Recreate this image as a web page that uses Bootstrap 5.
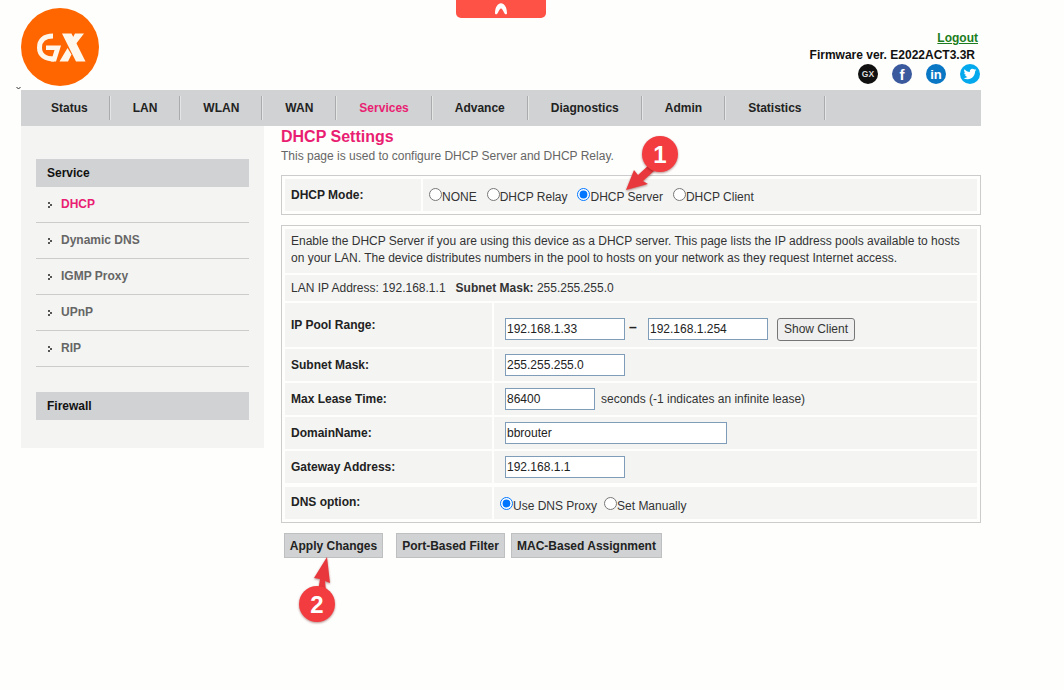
<!DOCTYPE html>
<html lang="en">
<head>
<meta charset="utf-8">
<title>DHCP Settings</title>
<link href="https://cdn.jsdelivr.net/npm/bootstrap@5.3.0/dist/css/bootstrap.min.css" rel="stylesheet">
<style>
body{background:#fefefc;font-family:"Liberation Sans",Arial,sans-serif;font-size:12px;color:#333;position:relative;width:1064px;height:690px;overflow:hidden}
.pagewrap{width:960px;margin-left:21px}
.tophead{height:90px}
.logo-mark{width:78px;height:78px;margin-top:8px;display:block}
.headright{padding-top:31px;line-height:14px;padding-right:1px}
.logout-link{color:#1b7d20;font-weight:700;text-decoration:underline;margin-right:2px;display:block}
.fw-line{font-weight:700;color:#111;margin-top:2px;margin-right:5px;height:14px;line-height:16px}
.socials{gap:14px;margin-top:3px;height:20px}
.socials svg{width:20px;height:20px;display:block}
.topnav{background:#d0d2d3;height:36px;padding-left:7px}
.topnav a{display:block;height:24px;line-height:24px;padding:0 22px 0 23px;font-weight:700;color:#222;text-decoration:none;border-right:1px solid #a9abac;box-shadow:1px 0 0 #e4e5e5}
.topnav a:first-child{padding-right:21px}
.topnav a.on{color:#e91e72}
.sidepane{width:243px;height:322px;background:#f4f5f3;padding:33px 15px 0}
.sidehead{background:#d0d2d3;height:28px;line-height:28px;padding-left:11px;font-weight:700;color:#111}
.sidelink{height:36px;line-height:33px;border-bottom:1px solid #ccc;padding-left:12px;font-weight:700;color:#666;gap:9px}
.sidelink.on{color:#e91e72}
.sidelink svg{width:4px;height:6px;flex:none;margin-top:0}
.side-gap{margin-top:25px}
.mainpane{width:700px;margin-left:17px}
.pagetitle{font-size:16px;font-weight:700;color:#e91e72;line-height:20px;margin:0;padding-top:1px}
.pagesub{color:#666;line-height:14px;margin:2px 0 12px}
.cfgbox{border:1px solid #ccc;padding:1px}
.box-gap{margin-top:10px}
.cfgtable{border-collapse:separate;border-spacing:2px;width:696px;table-layout:fixed}
.cfgtable td{background:#f4f5f3;padding:0 6px;vertical-align:middle;color:#333}
.cfgtable .lbl{font-weight:700;color:#222}
.col-mode{width:136px}
.col-wide{width:207px}
.h32{height:32px}
.radio-cell{padding-top:4px!important}
.radio-cell-low{padding-top:6px!important}
.lift-cell{padding-bottom:2px!important}
.radio-opt{display:inline-flex;align-items:center;margin:0 10px 0 0;color:#333}
.radio-opt input{margin:0;width:13px;height:13px;position:relative;top:-1px}
.radio-opt span{position:relative;top:1px}
.rowtext{line-height:17px;height:44px;padding-bottom:2px!important}
.field{height:22px;border:1px solid #7f9db9;background:#fff;font:12px "Liberation Sans",Arial,sans-serif;color:#222;padding:0 1px;border-radius:0;outline:0;display:block}
.w120{width:120px}.w90{width:90px}.w222{width:222px}
.field-cell{padding-left:11px!important}
.lease-gap{gap:6px}
.rangedash{width:23px;padding-left:4px;font-size:14px;line-height:14px;font-weight:700;color:#222;position:relative;top:-2px}
.showbtn{height:23px;width:78px;padding:0;margin-left:9px;white-space:nowrap;font:12px "Liberation Sans",Arial,sans-serif;color:#333;background:#efefef;border:1px solid #767676;border-radius:3px}
.actbtn{height:25px;background:#d0d2d3;border:1px solid #bdbfc0;border-radius:0;padding:0;font:700 12px "Liberation Sans",Arial,sans-serif;color:#222}
.actrow{padding-left:3px;margin-top:10px}
.overlay{position:absolute;left:0;top:0;width:1064px;height:690px;pointer-events:none}
.numtxt{font:700 24px "Liberation Sans",Arial,sans-serif;fill:#fff}
.pin{filter:drop-shadow(0 1px 1px rgba(90,0,0,.45))}
.pulltab{position:absolute;left:456px;top:0;width:90px;height:18px;background:#ff5247;border-radius:0 0 5px 5px}
.tinycaret{position:absolute;left:16px;top:86px;width:5px;height:4px}
</style>
</head>
<body>
<div class="pulltab d-flex justify-content-center align-items-start">
  <svg width="16" height="16" viewBox="0 0 16 16"><path fill="#fff" d="M2 13.500C2 7 5 3.300 8 3.300C11 3.300 14 7 14 13.500C13 15 12 14.500 11 12.500C10 10.500 9 8.500 8 8.500C7 8.500 6 10.500 5 12.500C4 14.500 3 15 2 13.500Z"/></svg>
</div>
<svg class="tinycaret" viewBox="0 0 5 4" fill="none"><path d="M.5 1 2.500 3 4.500 1" stroke="#333" stroke-width="1"/></svg>

<div class="pagewrap">
  <header class="tophead d-flex justify-content-between">
    <svg class="logo-mark" viewBox="0 0 78 78" role="img" aria-label="GX logo">
      <circle cx="39" cy="39" r="39" fill="#ff6600"/>
      <path d="M32 28C23 28 18.500 32.500 18.500 39.500C18.500 47 24 51 33 51" fill="none" stroke="#fff6ec" stroke-width="5"/>
      <path d="M25 37.500H40L35 53.500H30L33.500 42H25Z" fill="#fff6ec"/>
      <path d="M41 25.500H50.500L64.500 53.500H55Z" fill="#fff6ec"/>
      <path d="M54 25.500H63L54.500 36.500L50 33ZM46.500 40L50.500 46.500L47 53.500H38.500Z" fill="#fff6ec"/>
    </svg>
    <div class="headright text-end">
      <a class="logout-link" href="#">Logout</a>
      <div class="fw-line">Firmware ver. E2022ACT3.3R</div>
      <div class="socials d-flex justify-content-end">
        <svg viewBox="0 0 20 20"><circle cx="10" cy="10" r="10" fill="#111"/><text x="10" y="13" text-anchor="middle" font-family="Liberation Sans" font-weight="700" font-size="8.500" fill="#ddd">GX</text></svg>
        <svg viewBox="0 0 20 20"><circle cx="10" cy="10" r="10" fill="#3b5a9e"/><text x="10" y="16" text-anchor="middle" font-family="Liberation Sans" font-weight="700" font-size="15" fill="#fff">f</text></svg>
        <svg viewBox="0 0 20 20"><circle cx="10" cy="10" r="10" fill="#0a77c5"/><text x="10" y="15" text-anchor="middle" font-family="Liberation Sans" font-weight="700" font-size="13" fill="#fff">in</text></svg>
        <svg viewBox="0 0 20 20"><circle cx="10" cy="10" r="10" fill="#03a9ec"/><path transform="translate(3.600 3.600) scale(.53)" fill="#fff" d="M23.950 4.570a10 10 0 0 1-2.820.770 4.960 4.960 0 0 0 2.160-2.720c-.950.550-2 .950-3.130 1.180a4.920 4.920 0 0 0-8.380 4.480C7.690 8.100 4.070 6.130 1.640 3.160a4.820 4.820 0 0 0-.670 2.480c0 1.710.870 3.210 2.190 4.100a4.900 4.900 0 0 1-2.230-.620v.060a4.920 4.920 0 0 0 3.950 4.830c-.720.190-1.480.220-2.220.080a4.940 4.940 0 0 0 4.600 3.420A9.870 9.870 0 0 1 0 19.540a14 14 0 0 0 7.560 2.210c9.050 0 14-7.500 14-13.980 0-.210 0-.420-.020-.630a9.940 9.940 0 0 0 2.460-2.550z"/></svg>
      </div>
    </div>
  </header>

  <nav class="topnav d-flex align-items-center">
    <a href="#">Status</a><a href="#">LAN</a><a href="#">WLAN</a><a href="#">WAN</a><a href="#" class="on">Services</a><a href="#">Advance</a><a href="#">Diagnostics</a><a href="#">Admin</a><a href="#">Statistics</a>
  </nav>

  <div class="d-flex align-items-start">
    <aside class="sidepane">
      <div class="sidehead">Service</div>
      <div class="sidelink on d-flex align-items-center"><svg viewBox="0 0 4 6" fill="#555"><path d="M0 0h2v2H0zM2 2h2v2H2zM0 4h2v2H0z"/></svg><span>DHCP</span></div>
      <div class="sidelink d-flex align-items-center"><svg viewBox="0 0 4 6" fill="#555"><path d="M0 0h2v2H0zM2 2h2v2H2zM0 4h2v2H0z"/></svg><span>Dynamic DNS</span></div>
      <div class="sidelink d-flex align-items-center"><svg viewBox="0 0 4 6" fill="#555"><path d="M0 0h2v2H0zM2 2h2v2H2zM0 4h2v2H0z"/></svg><span>IGMP Proxy</span></div>
      <div class="sidelink d-flex align-items-center"><svg viewBox="0 0 4 6" fill="#555"><path d="M0 0h2v2H0zM2 2h2v2H2zM0 4h2v2H0z"/></svg><span>UPnP</span></div>
      <div class="sidelink d-flex align-items-center"><svg viewBox="0 0 4 6" fill="#555"><path d="M0 0h2v2H0zM2 2h2v2H2zM0 4h2v2H0z"/></svg><span>RIP</span></div>
      <div class="sidehead side-gap">Firewall</div>
    </aside>

    <main class="mainpane">
      <h1 class="pagetitle">DHCP Settings</h1>
      <p class="pagesub">This page is used to configure DHCP Server and DHCP Relay.</p>

      <div class="cfgbox">
        <table class="cfgtable">
          <colgroup><col class="col-mode"><col></colgroup>
          <tr class="h32">
            <td class="lbl">DHCP Mode:</td>
            <td class="radio-cell">
              <label class="radio-opt"><input type="radio" name="mode"><span>NONE</span></label><label class="radio-opt"><input type="radio" name="mode"><span>DHCP Relay</span></label><label class="radio-opt"><input type="radio" name="mode" checked><span>DHCP Server</span></label><label class="radio-opt"><input type="radio" name="mode"><span>DHCP Client</span></label>
            </td>
          </tr>
        </table>
      </div>

      <div class="cfgbox box-gap">
        <table class="cfgtable">
          <colgroup><col class="col-wide"><col></colgroup>
          <tr><td colspan="2" class="rowtext">Enable the DHCP Server if you are using this device as a DHCP server. This page lists the IP address pools available to hosts on your LAN. The device distributes numbers in the pool to hosts on your network as they request Internet access.</td></tr>
          <tr style="height:26px"><td colspan="2">LAN IP Address: 192.168.1.1 &nbsp;&nbsp;<b>Subnet Mask:</b> 255.255.255.0</td></tr>
          <tr style="height:44px">
            <td class="lbl">IP Pool Range:</td>
            <td class="field-cell">
              <div class="d-flex align-items-center pt-2">
                <input class="field w120" value="192.168.1.33">
                <span class="rangedash">–</span>
                <input class="field w120" value="192.168.1.254">
                <button type="button" class="showbtn">Show Client</button>
              </div>
            </td>
          </tr>
          <tr class="h32"><td class="lbl">Subnet Mask:</td><td class="field-cell"><input class="field w120" value="255.255.255.0"></td></tr>
          <tr class="h32"><td class="lbl">Max Lease Time:</td><td class="field-cell"><div class="d-flex align-items-center lease-gap"><input class="field w90" value="86400"><span>seconds (-1 indicates an infinite lease)</span></div></td></tr>
          <tr class="h32"><td class="lbl">DomainName:</td><td class="field-cell"><input class="field w222" value="bbrouter"></td></tr>
          <tr class="h32"><td class="lbl">Gateway Address:</td><td class="field-cell"><input class="field w120" value="192.168.1.1"></td></tr>
        </table>
        <table class="cfgtable">
          <colgroup><col class="col-wide"><col></colgroup>
          <tr class="h32">
            <td class="lbl lift-cell">DNS option:</td>
            <td class="radio-cell-low"><label class="radio-opt" style="margin-right:7px"><input type="radio" name="dns" checked><span>Use DNS Proxy</span></label><label class="radio-opt"><input type="radio" name="dns"><span>Set Manually</span></label></td>
          </tr>
        </table>
      </div>

      <div class="actrow d-flex">
        <button type="button" class="actbtn" style="width:99px">Apply Changes</button>
        <button type="button" class="actbtn" style="width:109px;margin-left:13px">Port-Based Filter</button>
        <button type="button" class="actbtn" style="width:151px;margin-left:6px">MAC-Based Assignment</button>
      </div>
    </main>
  </div>
</div>

<svg class="overlay" viewBox="0 0 1064 690">
  <polygon class="pin" points="626,190 634,170 638,175 650,164 655,170 643,181 648,184" fill="#e8383d"/>
  <circle class="pin" cx="660" cy="154" r="18" fill="#f23c40"/>
  <text class="numtxt" x="660" y="163" text-anchor="middle">1</text>
  <polygon class="pin" points="327,557 314,578 320,579 318,592 326,592 325,581 330,583" fill="#e8383d"/>
  <circle class="pin" cx="317" cy="604" r="18" fill="#f23c40"/>
  <text class="numtxt" x="317" y="613" text-anchor="middle">2</text>
</svg>
<script src="https://cdn.jsdelivr.net/npm/bootstrap@5.3.0/dist/js/bootstrap.bundle.min.js"></script>
</body>
</html>
